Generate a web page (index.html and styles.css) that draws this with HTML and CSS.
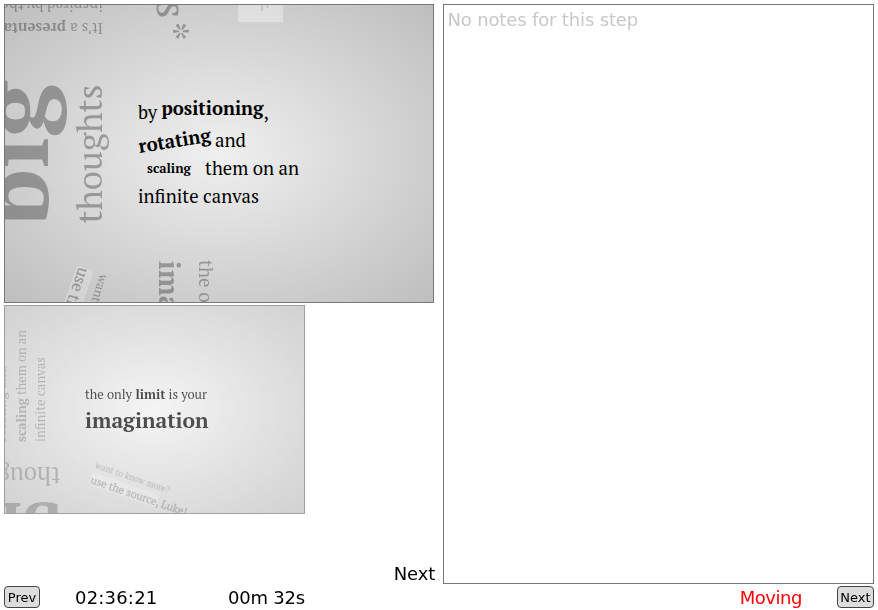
FILE: index.html
```html
<!DOCTYPE html>
<html lang="en">
<head>
<meta charset="utf-8">
<title>Speaker console</title>
<link rel="stylesheet" href="styles.css">
</head>
<body>
<main class="console">
  <div class="views">
    <svg class="slide current" viewBox="5 5 428 297">
      <rect class="plate" x="238" y="0" width="45" height="22"/>
      <path class="mark" d="M262 5v6M267.500 5v3"/>
      <g class="faded">
        <text transform="translate(103 22.500) rotate(180)" font-size="15" textLength="33" lengthAdjust="spacingAndGlyphs">It’s a</text>
        <text class="b" transform="translate(66 22.500) rotate(180)" font-size="15" textLength="92" lengthAdjust="spacingAndGlyphs">presentation</text>
        <text transform="translate(103 0) rotate(180)" font-size="15" textLength="102" lengthAdjust="spacingAndGlyphs">inspired by the</text>
        <text class="b" transform="translate(48 226) rotate(-90)" font-size="92" textLength="144" lengthAdjust="spacingAndGlyphs">big</text>
        <text transform="translate(102 223.500) rotate(-90)" font-size="35.500" textLength="139" lengthAdjust="spacingAndGlyphs">thoughts</text>
        <text transform="translate(156.500 0) rotate(90)" font-size="43">s</text>
        <text transform="translate(157 21.500) rotate(90)" font-size="42">*</text>
        <text class="b" transform="translate(158.500 260.500) rotate(90)" font-size="30" textLength="51" lengthAdjust="spacingAndGlyphs">ima</text>
        <text transform="translate(199 260) rotate(90)" font-size="20" textLength="69" lengthAdjust="spacingAndGlyphs">the only</text>
        <text transform="translate(100 273.500) rotate(107)" font-size="12.500" textLength="54" lengthAdjust="spacingAndGlyphs">want to k</text>
      </g>
      <rect class="plate soft" transform="translate(94 271) rotate(109)" width="120" height="18" rx="3"/>
      <text class="faded" transform="translate(79 266.500) rotate(109)" font-size="16.500" stroke="#000" stroke-width=".2" textLength="52" lengthAdjust="spacingAndGlyphs">use the</text>
      <text x="138" y="119" font-size="19.500" textLength="19" lengthAdjust="spacingAndGlyphs">by</text>
      <text class="b" x="161.500" y="115" font-size="19.500" textLength="102" lengthAdjust="spacingAndGlyphs">positioning</text>
      <text x="263.500" y="119" font-size="19.500">,</text>
      <text class="b" transform="translate(139.500 153) rotate(-9)" font-size="19.500" textLength="73" lengthAdjust="spacingAndGlyphs">rotating</text>
      <text x="215" y="147" font-size="19.500" textLength="31" lengthAdjust="spacingAndGlyphs">and</text>
      <text class="b" x="147" y="173" font-size="13.500" textLength="44" lengthAdjust="spacingAndGlyphs">scaling</text>
      <text x="205" y="175" font-size="19.500" textLength="94" lengthAdjust="spacingAndGlyphs">them on an</text>
      <text x="138" y="203" font-size="19.500" textLength="121" lengthAdjust="spacingAndGlyphs">infinite canvas</text>
    </svg>
    <svg class="slide upcoming" viewBox="5 306 299 207">
      <g class="faded">
        <text transform="translate(6 442) rotate(-90)" font-size="13.500" textLength="76" lengthAdjust="spacingAndGlyphs">rotating and</text>
        <text class="b" transform="translate(26 442) rotate(-90)" font-size="13.500" textLength="44" lengthAdjust="spacingAndGlyphs">scaling</text>
        <text transform="translate(26 395) rotate(-90)" font-size="13.500" textLength="65" lengthAdjust="spacingAndGlyphs">them on an</text>
        <text transform="translate(45 442) rotate(-90)" font-size="13.500" textLength="85" lengthAdjust="spacingAndGlyphs">infinite canvas</text>
        <text transform="translate(60 466.500) rotate(180)" font-size="24.500" textLength="96" lengthAdjust="spacingAndGlyphs">thoughts</text>
        <text class="b" transform="translate(62 502.500) rotate(180)" font-size="63" textLength="100" lengthAdjust="spacingAndGlyphs">big</text>
        <text transform="translate(94.500 468) rotate(19)" font-size="8.700" textLength="78" lengthAdjust="spacingAndGlyphs">want to know more?</text>
      </g>
      <rect class="plate soft" transform="translate(93 472) rotate(19)" width="70" height="13" rx="2"/>
      <text class="faded" transform="translate(90 483) rotate(19)" font-size="11" stroke="#000" stroke-width=".3" textLength="101" lengthAdjust="spacingAndGlyphs">use the source, Luke!</text>
      <text x="85" y="399" font-size="13.300" textLength="47" lengthAdjust="spacingAndGlyphs">the only</text>
      <text class="b" x="135.500" y="399" font-size="13.300" textLength="30" lengthAdjust="spacingAndGlyphs">limit</text>
      <text x="168.500" y="399" font-size="13.300" textLength="38.500" lengthAdjust="spacingAndGlyphs">is your</text>
      <text class="b" x="85" y="428" font-size="21.500" textLength="123.500" lengthAdjust="spacingAndGlyphs">imagination</text>
    </svg>
    <div class="label">Next</div>
  </div>
  <section class="notes">No notes for this step</section>
</main>
<footer class="controls">
  <button class="btn prev">Prev</button>
  <span class="clock">02:36:21</span>
  <span class="timer">00m 32s</span>
  <span class="status">Moving</span>
  <button class="btn next">Next</button>
</footer>
</body>
</html>
```
FILE: styles.css
```css
* { box-sizing: border-box; }
body {
  margin: 0;
  width: 878px;
  height: 610px;
  padding: 4px;
  overflow: hidden;
  background: #fff;
  color: #000;
  font: 18px/22px "DejaVu Sans", sans-serif;
}
.console {
  display: grid;
  grid-template-columns: 431px 431px;
  column-gap: 8px;
  height: 580px;
}
.views { display: flex; flex-direction: column; align-items: flex-start; }
.slide {
  display: block;
  flex: none;
  border: 1px solid #777;
  overflow: hidden;
  background: radial-gradient(rgb(240, 240, 240), rgb(190, 190, 190));
  font-family: "PT Serif", "Liberation Serif", serif;
}
.current { width: 430px; height: 299px; }
.upcoming { width: 301px; height: 209px; margin-top: 2px; opacity: .7; }
.b { font-weight: bold; }
.faded { opacity: .3; }
.plate { fill: #fff; opacity: .35; }
.soft { opacity: .22; }
.mark { stroke: #aaa; stroke-width: 2; opacity: .5; }
.label { margin: auto 0 -1px; align-self: flex-end; letter-spacing: -.2px; }
.notes {
  border: 1px solid #777;
  padding: 4px 3.5px;
  color: #c8c8c8;
  letter-spacing: -.15px;
}
.controls { display: flex; align-items: center; height: 22px; margin-top: 2px; }
.controls span { padding-top: 2px; }
.btn {
  height: 22px;
  padding: 0;
  border: 1px solid #444;
  border-radius: 4px;
  background: #ddd;
  color: #000;
  font: 13px "DejaVu Sans", sans-serif;
}
.prev { width: 36px; }
.next { width: 37px; margin-left: 35px; }
.clock { margin-left: 35px; letter-spacing: .2px; }
.timer { margin-left: 70.5px; letter-spacing: -.2px; }
.status { margin-left: auto; color: #f00; letter-spacing: -.45px; }
```
